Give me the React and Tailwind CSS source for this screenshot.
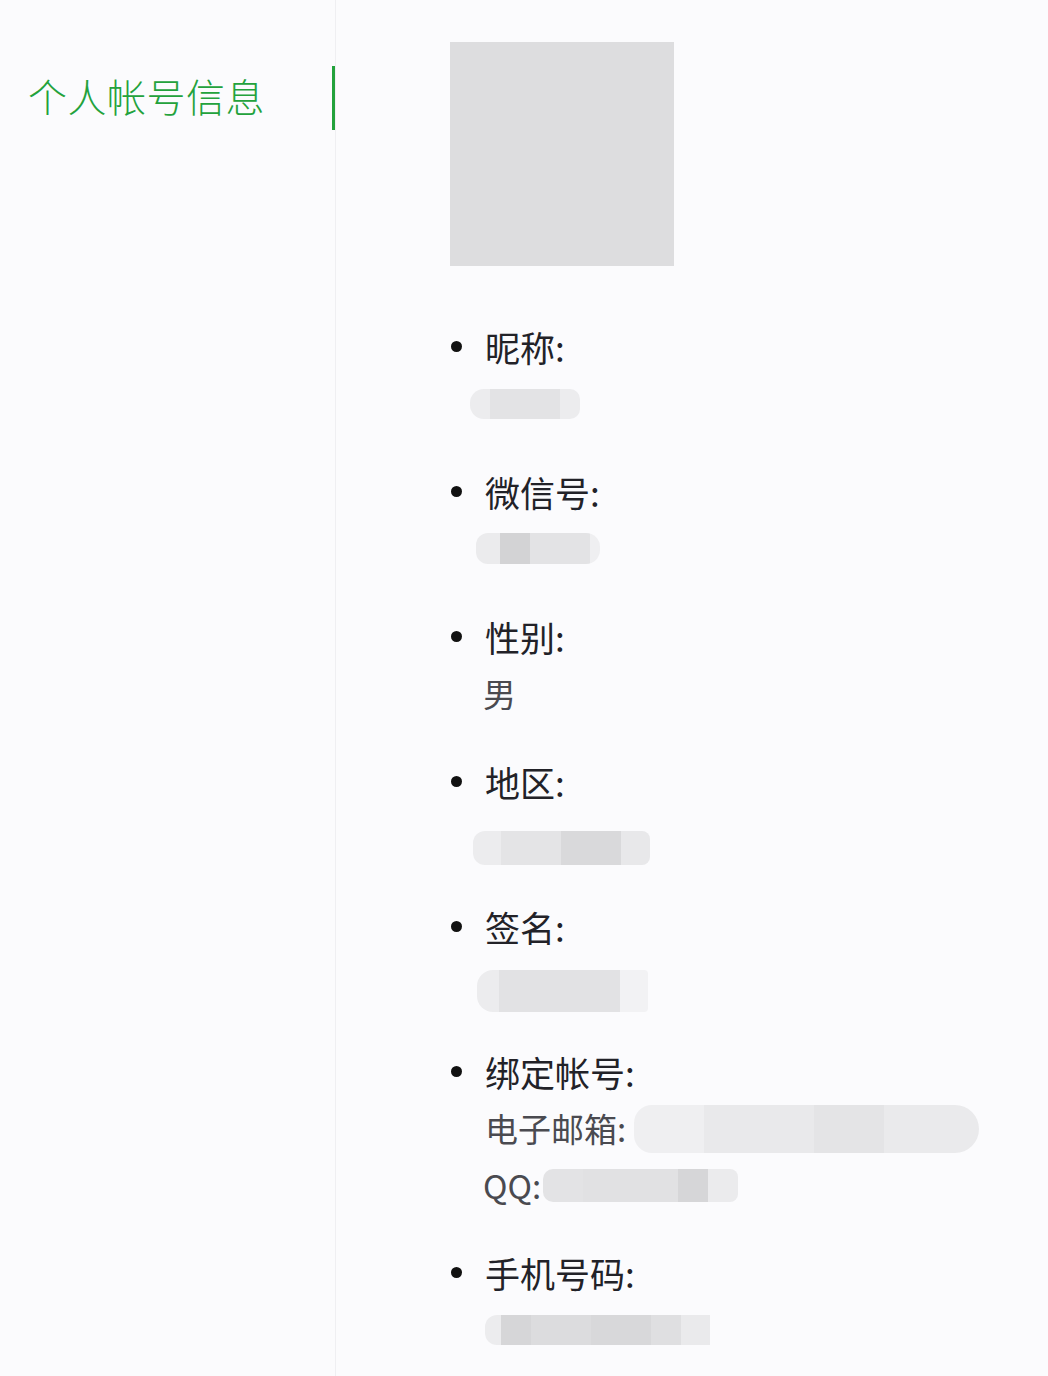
import React from "react";

const font = { fontFamily: '"Noto Sans CJK SC", "Noto Sans", sans-serif' };

function Label({ children }) {
  return (
    <div className="flex h-[57px] items-center">
      <span className="ml-[1px] mr-[23px] h-[11px] w-[11px] rounded-full bg-[#111]" />
      <span className="text-[35px] leading-none text-[#222228]">{children}</span>
    </div>
  );
}

function Item({ label, children }) {
  return (
    <li className="flex flex-col">
      <Label>{label}</Label>
      <div className="flex flex-col pl-[35px]">{children}</div>
    </li>
  );
}

export default function App() {
  return (
    <div className="flex min-h-[1376px] w-[1048px] bg-[#fbfbfd]" style={font}>
      {/* sidebar */}
      <aside className="w-[336px] shrink-0 border-r border-[#efeff2]">
        <div className="mt-[66px] flex h-[64px] items-center justify-between">
          <span className="pb-[6px] pl-[28px] text-[39px] font-light leading-none tracking-[0.5px] text-[#23a23c]">
            个人帐号信息
          </span>
          <span className="h-full w-[3px] bg-[#23a23c]" />
        </div>
      </aside>

      {/* content */}
      <main className="flex flex-col pl-[114px] pt-[42px]">
        <div className="h-[224px] w-[224px] bg-[#dddddf]" />

        <ul className="mt-[52px] flex flex-col gap-[31px]">
          <Item label="昵称:">
            <div className="flex h-[57px] items-center">
              <div className="-ml-[15px] flex h-[30px] overflow-hidden rounded-l-[14px] rounded-r-[10px]">
                <div className="w-[20px] bg-[#ececee]" />
                <div className="w-[70px] bg-[#e3e3e5]" />
                <div className="w-[20px] bg-[#ececee]" />
              </div>
            </div>
          </Item>

          <Item label="微信号:">
            <div className="flex h-[57px] items-center">
              <div className="-ml-[9px] flex h-[31px] overflow-hidden rounded-l-[12px] rounded-r-[14px]">
                <div className="w-[24px] bg-[#ebebed]" />
                <div className="w-[30px] bg-[#d3d3d5]" />
                <div className="w-[60px] bg-[#e3e3e5]" />
                <div className="w-[10px] bg-[#efeff1]" />
              </div>
            </div>
          </Item>

          <Item label="性别:">
            <div className="flex h-[57px] items-center">
              <span className="-ml-[2px] text-[33px] leading-none text-[#4a4a50]">男</span>
            </div>
          </Item>

          <Item label="地区:">
            <div className="flex h-[57px] items-end pb-[2px]">
              <div className="-ml-[12px] flex h-[34px] overflow-hidden rounded-l-[12px] rounded-r-[8px]">
                <div className="w-[28px] bg-[#ececee]" />
                <div className="w-[60px] bg-[#e4e4e6]" />
                <div className="w-[60px] bg-[#d9d9db]" />
                <div className="w-[29px] bg-[#e8e8ea]" />
              </div>
            </div>
          </Item>

          <Item label="签名:">
            <div className="flex h-[57px] items-end">
              <div className="-ml-[8px] flex h-[42px] overflow-hidden rounded-l-[16px] rounded-r-[4px]">
                <div className="w-[22px] bg-[#ececee]" />
                <div className="w-[121px] bg-[#e2e2e4]" />
                <div className="w-[28px] bg-[#f2f2f4]" />
              </div>
            </div>
          </Item>

          <Item label="绑定帐号:">
            <div className="flex h-[57px] items-center">
              <span className="text-[33px] leading-none text-[#4a4a50]">电子邮箱:</span>
              <div className="ml-[8px] flex h-[48px] overflow-hidden rounded-l-[18px] rounded-r-[24px]">
                <div className="w-[70px] bg-[#efeff1]" />
                <div className="w-[110px] bg-[#e9e9eb]" />
                <div className="w-[70px] bg-[#e4e4e6]" />
                <div className="w-[95px] bg-[#eaeaec]" />
              </div>
            </div>
            <div className="flex h-[56px] items-center">
              <span className="-ml-[2px] text-[33px] leading-none text-[#4a4a50]">QQ:</span>
              <div className="ml-[2px] flex h-[33px] overflow-hidden rounded-l-[10px] rounded-r-[8px]">
                <div className="w-[40px] bg-[#e3e3e5]" />
                <div className="w-[95px] bg-[#e1e1e3]" />
                <div className="w-[30px] bg-[#d6d6d8]" />
                <div className="w-[30px] bg-[#ebebed]" />
              </div>
            </div>
          </Item>

          <Item label="手机号码:">
            <div className="flex h-[57px] items-center">
              <div className="flex h-[30px] overflow-hidden rounded-l-[12px]">
                <div className="w-[16px] bg-[#ececee]" />
                <div className="w-[30px] bg-[#d6d6d8]" />
                <div className="w-[60px] bg-[#dcdcde]" />
                <div className="w-[60px] bg-[#d8d8da]" />
                <div className="w-[30px] bg-[#dfdfe1]" />
                <div className="w-[29px] bg-[#eaeaec]" />
              </div>
            </div>
          </Item>
        </ul>
      </main>
    </div>
  );
}
